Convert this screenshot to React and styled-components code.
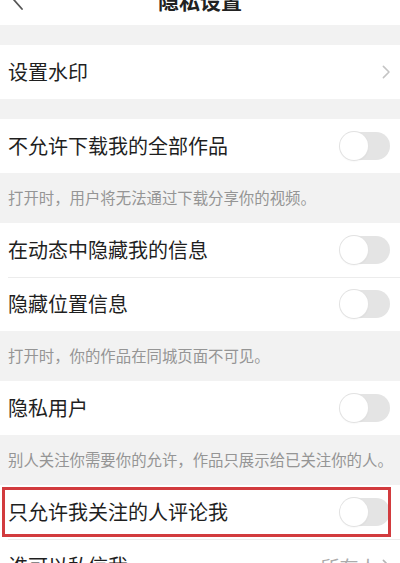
import React from 'react';
import styled, { createGlobalStyle } from 'styled-components';

const GlobalStyle = createGlobalStyle`
  html, body {
    margin: 0;
    padding: 0;
    background: #f2f2f2;
    overflow: hidden;
  }
  * {
    box-sizing: border-box;
  }
`;

const Page = styled.div`
  width: 400px;
  margin-top: -25px;
  font-family: 'Noto Sans CJK SC', 'Noto Sans', sans-serif;
  color: #1f1f1f;
  background: #f2f2f2;
`;

const Header = styled.header`
  height: 50px;
  background: #fff;
  display: flex;
  align-items: center;
  justify-content: center;
  position: relative;
`;

const Back = styled.div`
  position: absolute;
  left: 12px;
  top: 50%;
  transform: translateY(-50%);
  display: flex;
`;

const Title = styled.h1`
  margin: 0;
  font-size: 21px;
  font-weight: 700;
  color: #222;
`;

const Gap = styled.div`
  height: 20px;
`;

const Row = styled.div`
  position: relative;
  height: 54px;
  background: #fff;
  display: flex;
  align-items: center;
  justify-content: space-between;
  padding: 0 10px 0 8px;
  font-size: 20px;

  ${({ divided }) =>
    divided &&
    `
    &::before {
      content: '';
      position: absolute;
      left: 8px;
      right: 0;
      top: 0;
      height: 1px;
      background: #ececec;
    }
  `}

  ${({ highlighted }) =>
    highlighted &&
    `
    &::after {
      content: '';
      position: absolute;
      left: 2px;
      right: 9px;
      top: 2px;
      bottom: 2px;
      border: 3px solid #d23b3e;
      pointer-events: none;
    }
  `}
`;

const Label = styled.span`
  line-height: 1;
`;

const Desc = styled.div`
  height: 50px;
  display: flex;
  align-items: center;
  padding: 0 8px 2px;
  font-size: 15.4px;
  color: #959595;
  background: #f2f2f2;
  white-space: nowrap;
`;

const Track = styled.div`
  width: 50px;
  height: 28px;
  border-radius: 14px;
  background: #e4e4e4;
  position: relative;
`;

const Knob = styled.div`
  position: absolute;
  left: 0;
  top: 0;
  width: 28px;
  height: 28px;
  border-radius: 50%;
  background: #fff;
  box-shadow: 0 0 0 1px #e2e2e2, 0 1px 2px rgba(0, 0, 0, 0.08);
`;

const Value = styled.span`
  display: flex;
  align-items: center;
  gap: 4px;
  font-size: 19px;
  color: #ababab;
`;

const Toggle = () => (
  <Track>
    <Knob />
  </Track>
);

const Chevron = ({ color = '#c4c4c4', size = 14 }) => (
  <svg width={size * 0.6} height={size} viewBox="0 0 6 10" fill="none">
    <path d="M1 1l4 4-4 4" stroke={color} strokeWidth="1.1" strokeLinecap="round" strokeLinejoin="round" />
  </svg>
);

const App = () => (
  <>
    <GlobalStyle />
    <Page>
      <Header>
        <Back>
          <svg width="12" height="20" viewBox="0 0 12 20" fill="none">
            <path d="M10 1L2 10l8 9" stroke="#555" strokeWidth="1.8" strokeLinecap="round" strokeLinejoin="round" />
          </svg>
        </Back>
        <Title>隐私设置</Title>
      </Header>
      <Gap />
      <Row>
        <Label>设置水印</Label>
        <Chevron />
      </Row>
      <Gap />
      <Row>
        <Label>不允许下载我的全部作品</Label>
        <Toggle />
      </Row>
      <Desc>打开时，用户将无法通过下载分享你的视频。</Desc>
      <Row>
        <Label>在动态中隐藏我的信息</Label>
        <Toggle />
      </Row>
      <Row divided>
        <Label>隐藏位置信息</Label>
        <Toggle />
      </Row>
      <Desc>打开时，你的作品在同城页面不可见。</Desc>
      <Row>
        <Label>隐私用户</Label>
        <Toggle />
      </Row>
      <Desc>别人关注你需要你的允许，作品只展示给已关注你的人。</Desc>
      <Row highlighted>
        <Label>只允许我关注的人评论我</Label>
        <Toggle />
      </Row>
      <Row divided>
        <Label>谁可以私信我</Label>
        <Value>
          所有人
          <Chevron color="#b5b5b5" />
        </Value>
      </Row>
    </Page>
  </>
);

export default App;
